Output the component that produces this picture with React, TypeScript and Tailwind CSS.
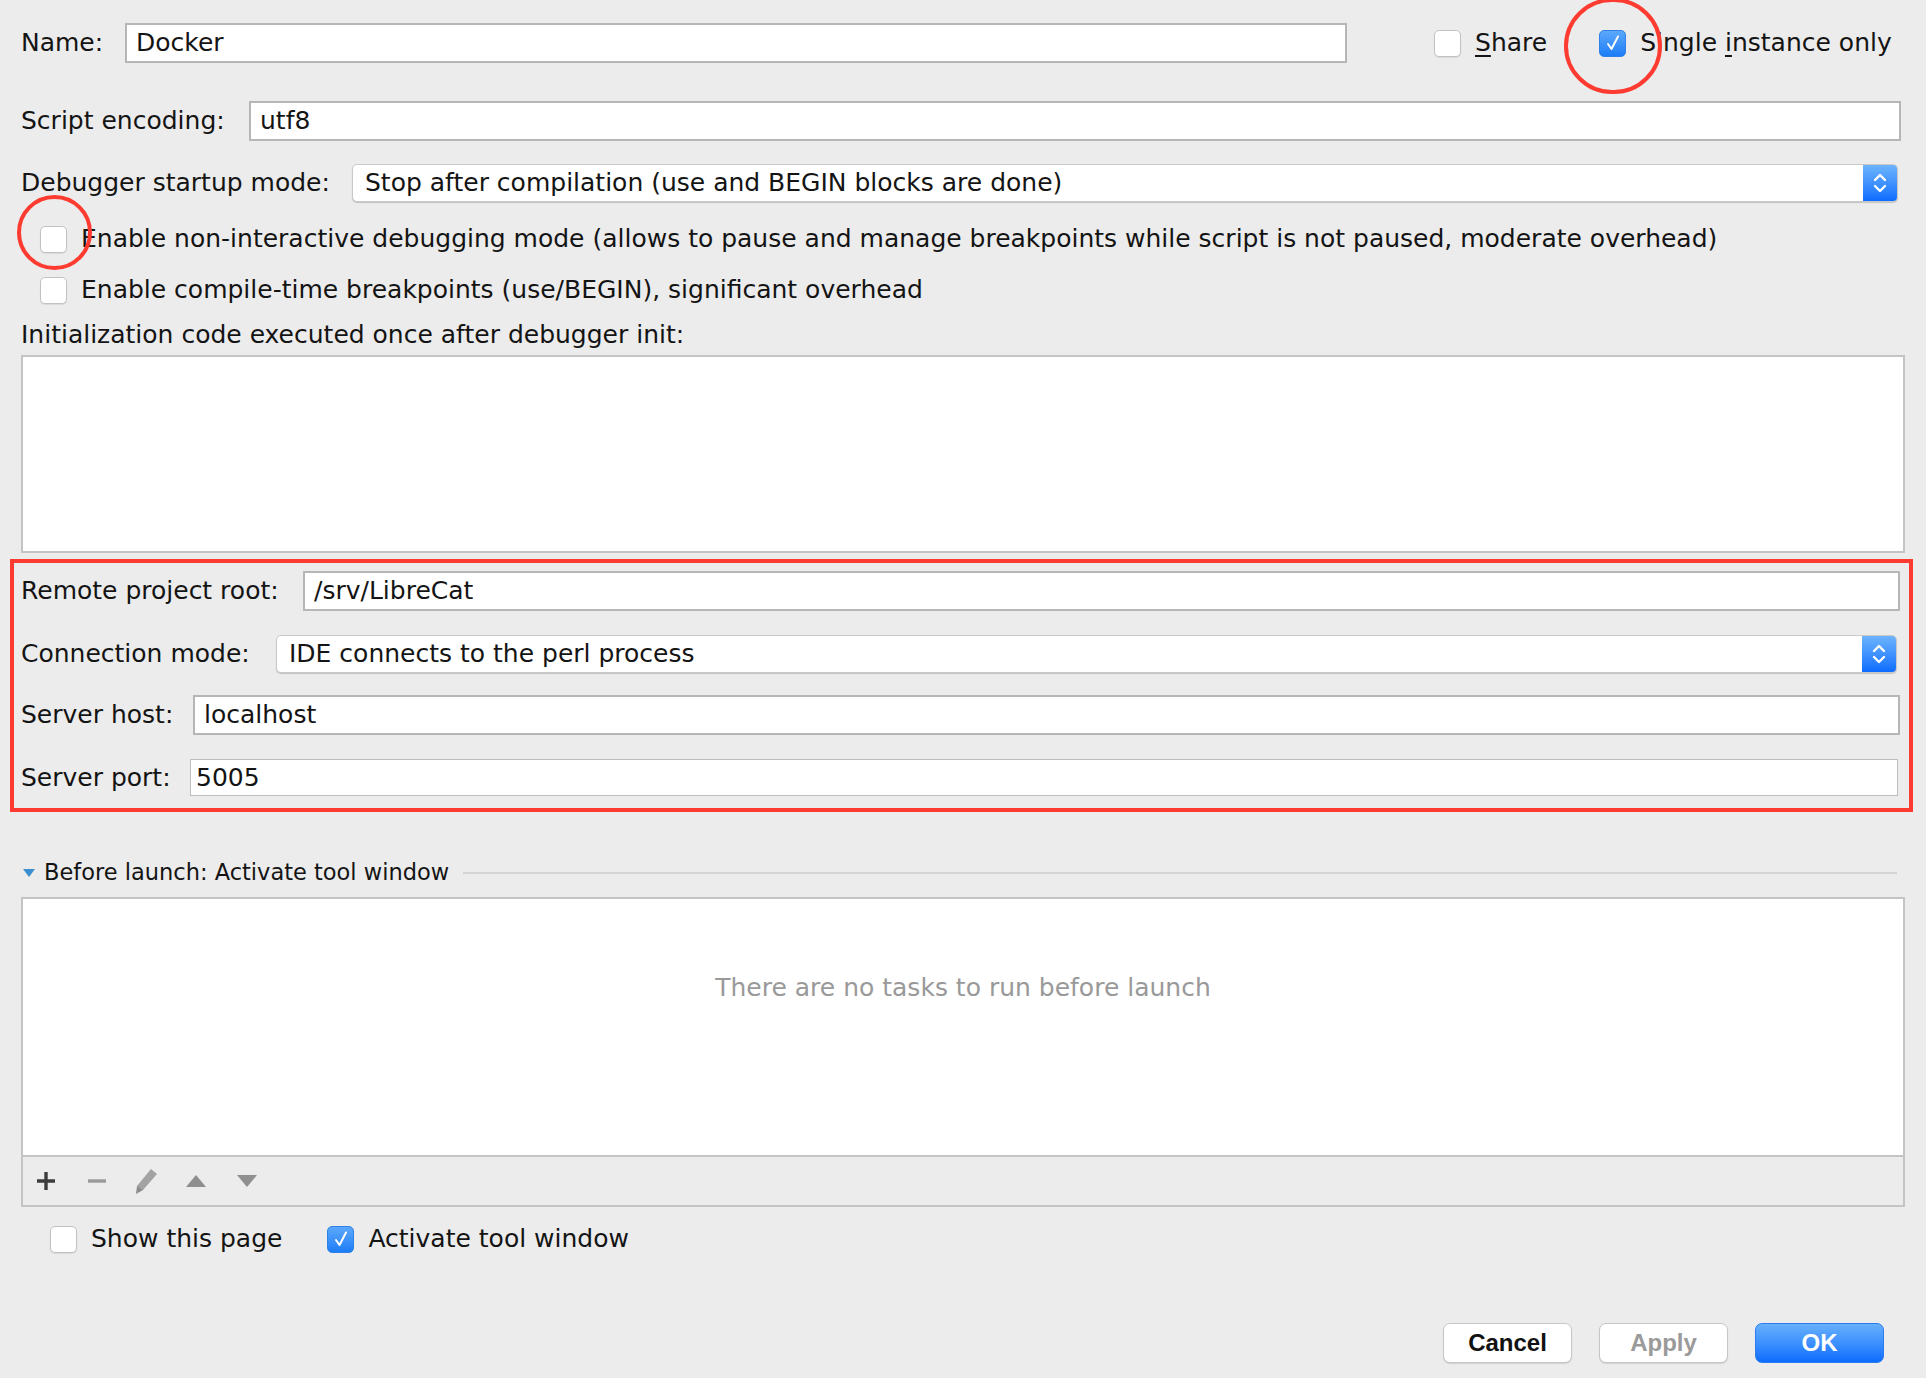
import React from 'react'

const font = { fontFamily: '"DejaVu Sans", "Liberation Sans", sans-serif' }

function Check(props: { checked?: boolean }) {
  if (props.checked) {
    return (
      <div className="w-[27px] h-[27px] shrink-0 rounded-[5px] bg-gradient-to-b from-[#5ba8fc] to-[#1b7df6] border border-[#2f80e8] flex items-center justify-center">
        <svg width="20" height="20" viewBox="0 0 20 20">
          <path d="M5 11 L8.5 16 L15 3.5" fill="none" stroke="#fff" strokeWidth="2" strokeLinecap="round" strokeLinejoin="round" />
        </svg>
      </div>
    )
  }
  return (
    <div className="w-[27px] h-[27px] shrink-0 rounded-[5px] bg-white border border-[#c2c2c2] shadow-[0_1px_1px_rgba(0,0,0,0.08)]" />
  )
}

function Field(props: { label: string; labelW: string; value: string; thin?: boolean; pad?: string }) {
  return (
    <div className="flex items-center h-full">
      <div className={`${props.labelW} shrink-0`}>{props.label}</div>
      <div
        className={`flex-1 h-full bg-white flex items-center ${props.thin ? 'border border-[#bdbdbd]' : 'border-2 border-[#b6b6b6]'} ${props.pad ?? 'pl-[9px]'}`}
      >
        {props.value}
      </div>
    </div>
  )
}

function Select(props: { label: string; labelW: string; value: string }) {
  return (
    <div className="flex items-center h-full mr-[3px]">
      <div className={`${props.labelW} shrink-0`}>{props.label}</div>
      <div className="flex-1 h-full bg-white flex items-center rounded-[5px] border border-[#c9c9c9] shadow-[0_1px_1px_rgba(0,0,0,0.18)] overflow-hidden">
        <div className="flex-1 pl-[12px]">{props.value}</div>
        <div className="w-[34px] h-full bg-gradient-to-b from-[#6cb4fc] to-[#0a6cfe] flex items-center justify-center">
          <svg width="16" height="26" viewBox="0 0 16 26">
            <path d="M3 10 L8 5 L13 10" fill="none" stroke="#fff" strokeWidth="2.4" strokeLinecap="round" strokeLinejoin="round" />
            <path d="M3 16 L8 21 L13 16" fill="none" stroke="#fff" strokeWidth="2.4" strokeLinecap="round" strokeLinejoin="round" />
          </svg>
        </div>
      </div>
    </div>
  )
}

export default function App() {
  return (
    <div
      className="relative w-[1926px] h-[1378px] bg-[#ececec] text-[#141414] text-[25px] pl-[21px] pr-[25px] overflow-hidden"
      style={font}
    >
      {/* name row */}
      <div className="flex items-center mt-[23px] h-[40px]">
        <div className="w-[104px] shrink-0">Name:</div>
        <div className="w-[1222px] h-full bg-white border-2 border-[#b6b6b6] flex items-center pl-[9px]">Docker</div>
        <div className="ml-[87px] flex items-center">
          <Check />
          <span className="ml-[14px]">
            <span className="underline underline-offset-[4px]">S</span>hare
          </span>
        </div>
        <div className="ml-[52px] flex items-center">
          <Check checked />
          <span className="ml-[14px]">
            Single <span className="underline underline-offset-[4px]">i</span>nstance only
          </span>
        </div>
      </div>

      <div className="mt-[38px] h-[40px]">
        <Field label="Script encoding:" labelW="w-[228px]" value="utf8" />
      </div>

      <div className="mt-[23px] h-[38px]">
        <Select label="Debugger startup mode:" labelW="w-[331px]" value="Stop after compilation (use and BEGIN blocks are done)" />
      </div>

      <div className="mt-[17px] h-[40px] flex items-center pl-[19px]">
        <Check />
        <span className="ml-[14px]">
          Enable non-interactive debugging mode (allows to pause and manage breakpoints while script is not paused, moderate overhead)
        </span>
      </div>
      <div className="mt-[11px] h-[40px] flex items-center pl-[19px]">
        <Check />
        <span className="ml-[14px]">Enable compile-time breakpoints (use/BEGIN), significant overhead</span>
      </div>

      <div className="mt-[10px] h-[30px] flex items-center">Initialization code executed once after debugger init:</div>
      <div className="mt-[5px] h-[198px] mr-[-4px] bg-white border-2 border-[#c4c4c4]" />

      {/* remote section, highlighted */}
      <div className="mt-[6px] h-[253px] ml-[-11px] mr-[-12px] border-4 border-[#fd3b30] pl-[7px] pr-[9px] pt-[8px]">
        <div className="h-[40px]">
          <Field label="Remote project root:" labelW="w-[282px]" value="/srv/LibreCat" />
        </div>
        <div className="mt-[24px] h-[38px]">
          <Select label="Connection mode:" labelW="w-[255px]" value="IDE connects to the perl process" />
        </div>
        <div className="mt-[22px] h-[40px]">
          <Field label="Server host:" labelW="w-[172px]" value="localhost" />
        </div>
        <div className="mt-[24px] h-[37px] mr-[2px]">
          <Field label="Server port:" labelW="w-[169px]" value="5005" thin pad="pl-[5px]" />
        </div>
      </div>

      {/* before launch */}
      <div className="mt-[46px] h-[30px] flex items-center">
        <svg width="14" height="10" viewBox="0 0 14 10" className="ml-[1px]">
          <path d="M1 1 L13 1 L7 9 Z" fill="#3b8fd0" />
        </svg>
        <span className="ml-[8px] text-[22.5px]">Before launch: Activate tool window</span>
        <div className="flex-1 h-[2px] bg-[#d4d4d4] ml-[14px] mr-[4px]" />
      </div>

      <div className="mt-[9px] h-[310px] mr-[-4px] border-2 border-[#c4c4c4] flex flex-col">
        <div className="flex-1 bg-white flex items-center justify-center text-[#999999] pb-[78px]">
          There are no tasks to run before launch
        </div>
        <div className="h-[50px] border-t-2 border-[#c4c4c4] flex items-center pl-[12px] gap-[21px]">
          <svg width="22" height="22" viewBox="0 0 22 22">
            <path d="M11 2 V20 M2 11 H20" stroke="#3c3c3c" strokeWidth="3.4" />
          </svg>
          <svg width="22" height="22" viewBox="0 0 22 22" className="ml-[8px]">
            <path d="M2 11 H20" stroke="#9a9a9a" strokeWidth="3.4" />
          </svg>
          <svg width="26" height="28" viewBox="0 0 26 28" className="ml-[4px]">
            <path d="M18 2 L24 7 L10 23 L5 24 L4 19 Z" fill="#a3a3a3" />
            <path d="M4 19 L10 23 L3 27 Z" fill="#8c8c8c" />
          </svg>
          <svg width="22" height="18" viewBox="0 0 22 18" className="ml-[5px]">
            <path d="M11 3 L21 15 L1 15 Z" fill="#8f8f8f" />
          </svg>
          <svg width="22" height="18" viewBox="0 0 22 18" className="ml-[8px]">
            <path d="M1 3 L21 3 L11 15 Z" fill="#8f8f8f" />
          </svg>
        </div>
      </div>

      <div className="mt-[12px] h-[40px] flex items-center pl-[29px]">
        <Check />
        <span className="ml-[14px]">Show this page</span>
        <div className="ml-[45px] flex items-center">
          <Check checked />
          <span className="ml-[14px]">Activate tool window</span>
        </div>
      </div>

      {/* buttons */}
      <div
        className="mt-[64px] flex justify-end gap-[27px] mr-[17px] text-[24px] font-bold"
        style={{ fontFamily: '"Liberation Sans", Arial, sans-serif' }}
      >
        <div className="w-[129px] h-[40px] rounded-[7px] bg-white border border-[#c6c6c6] shadow-[0_1px_1px_rgba(0,0,0,0.12)] flex items-center justify-center text-[#111]">
          Cancel
        </div>
        <div className="w-[129px] h-[40px] rounded-[7px] bg-white border border-[#c6c6c6] shadow-[0_1px_1px_rgba(0,0,0,0.12)] flex items-center justify-center text-[#9a9a9a]">
          Apply
        </div>
        <div className="w-[129px] h-[40px] rounded-[7px] bg-gradient-to-b from-[#66b0fc] to-[#0a6cfe] border border-[#2a7cf0] flex items-center justify-center text-white">
          OK
        </div>
      </div>

      {/* annotation circles */}
      <div className="absolute left-[1564px] top-[-2px] w-[98px] h-[96px] rounded-full border-4 border-[#fd3b30]" />
      <div className="absolute left-[17px] top-[195px] w-[75px] h-[75px] rounded-full border-4 border-[#fd3b30]" />
    </div>
  )
}
